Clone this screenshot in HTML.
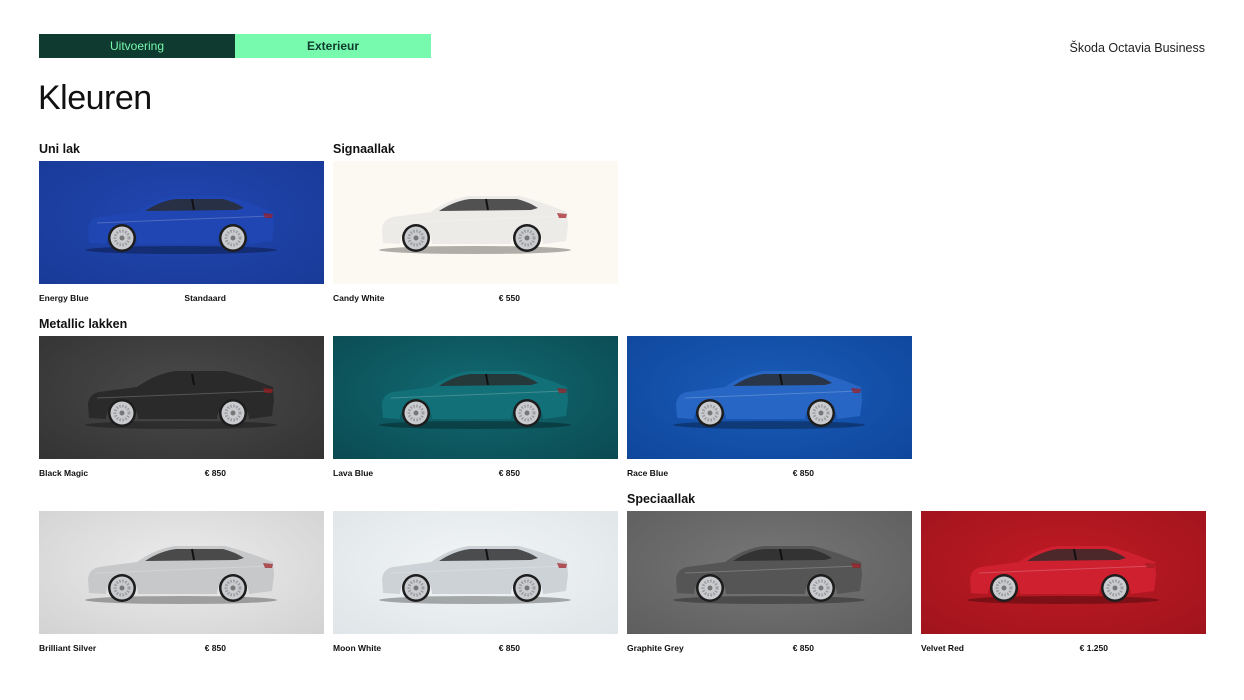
<!DOCTYPE html>
<html><head><meta charset="utf-8"><style>
*{margin:0;padding:0;box-sizing:border-box}
body{width:1244px;height:700px;background:#fff;font-family:"Liberation Sans",sans-serif;color:#111;position:relative;overflow:hidden}
.tab{position:absolute;top:34px;height:24px;width:196px;font-size:12px;line-height:24px;text-align:center}
.t1{left:39px;background:#0e3a2f;color:#78faae}
.t2{left:235px;background:#78faae;color:#0e3a2f;font-weight:bold}
.brand{position:absolute;right:39px;top:41px;font-size:12.5px;color:#222}
h1{position:absolute;left:38px;top:79px;font-size:34px;font-weight:normal;letter-spacing:-0.5px;color:#111}
.h{position:absolute;font-size:12.5px;font-weight:bold;color:#111}
.tile{position:absolute;width:285px;height:123px}
.tile svg{position:absolute;left:0;top:0}
.lab{position:absolute;font-size:8.5px;font-weight:bold;color:#111}
.pr{position:absolute;font-size:8.5px;font-weight:bold;color:#111;text-align:right;width:80px}
</style></head><body>
<svg width="0" height="0" style="position:absolute">
<defs>
<symbol id="car" viewBox="0 0 285 123">
<ellipse cx="142" cy="89" rx="96" ry="4" fill="#000" opacity=".3"/>
<path d="M50,82 L49,68 Q50,58 60,56 L98,51 Q116,38 136,35 L186,35 Q206,40 226,48 L234,51 L235,64 L233,80 L210,83 A16,16 0 0 0 178,83 L99,83 A16,16 0 0 0 67,83 Z" fill="currentColor"/>
<path d="M106,50 Q121,40 137,38 L184,38 Q196,41 205,47 L198,49 Z" fill="#2a2a2a" opacity=".8"/>
<path d="M153,38 L155,49" stroke="#111" stroke-width="2"/>
<path d="M58,62 L232,55" stroke="#fff" stroke-width="1" opacity=".2"/>
<path d="M224,52 L234,53 L233,57 L226,57 Z" fill="#a01a20" opacity=".7"/>
<circle cx="83" cy="77" r="14" fill="#1d1d1d"/><circle cx="83" cy="77" r="11.5" fill="#c9cbce"/><circle cx="83" cy="77" r="7" fill="none" stroke="#9a9ca0" stroke-width="3" stroke-dasharray="1.5 1.5"/><circle cx="83" cy="77" r="2.5" fill="#777"/>
<circle cx="194" cy="77" r="14" fill="#1d1d1d"/><circle cx="194" cy="77" r="11.5" fill="#c9cbce"/><circle cx="194" cy="77" r="7" fill="none" stroke="#9a9ca0" stroke-width="3" stroke-dasharray="1.5 1.5"/><circle cx="194" cy="77" r="2.5" fill="#777"/>
</symbol>
</defs></svg>

<div class="tab t1">Uitvoering</div><div class="tab t2">Exterieur</div>
<div class="brand">Škoda Octavia Business</div>
<h1>Kleuren</h1>

<div class="h" style="left:39px;top:142px">Uni lak</div>
<div class="h" style="left:333px;top:142px">Signaallak</div>
<div class="h" style="left:39px;top:317px">Metallic lakken</div>
<div class="h" style="left:627px;top:492px">Speciaallak</div>

<div class="tile" style="left:39px;top:161px;background:radial-gradient(ellipse at 50% 45%,#2146b0,#183a98);color:#1f46b2"><svg width="285" height="123"><use href="#car"/></svg></div>
<div class="tile" style="left:333px;top:161px;background:#fcf8f2;color:#ecebe8"><svg width="285" height="123"><use href="#car"/></svg></div>

<div class="tile" style="left:39px;top:336px;background:radial-gradient(ellipse at 50% 45%,#4a4a4a,#333);color:#2a2a2a"><svg width="285" height="123"><use href="#car"/></svg></div>
<div class="tile" style="left:333px;top:336px;background:radial-gradient(ellipse at 50% 45%,#116a72,#0b4a52);color:#127078"><svg width="285" height="123"><use href="#car"/></svg></div>
<div class="tile" style="left:627px;top:336px;background:radial-gradient(ellipse at 50% 45%,#1a5cb8,#0f469c);color:#2766c4"><svg width="285" height="123"><use href="#car"/></svg></div>

<div class="tile" style="left:39px;top:511px;background:radial-gradient(ellipse at 50% 45%,#ececec,#d2d2d2);color:#c6c8ca"><svg width="285" height="123"><use href="#car"/></svg></div>
<div class="tile" style="left:333px;top:511px;background:radial-gradient(ellipse at 50% 45%,#f2f5f6,#dfe5e8);color:#cdd2d6"><svg width="285" height="123"><use href="#car"/></svg></div>
<div class="tile" style="left:627px;top:511px;background:radial-gradient(ellipse at 50% 45%,#777,#5e5e5e);color:#555"><svg width="285" height="123"><use href="#car"/></svg></div>
<div class="tile" style="left:921px;top:511px;background:radial-gradient(ellipse at 50% 45%,#c01a24,#a0141c);color:#cf2030"><svg width="285" height="123"><use href="#car"/></svg></div>

<div class="lab" style="left:39px;top:293px">Energy Blue</div><div class="pr" style="left:146px;top:293px">Standaard</div>
<div class="lab" style="left:333px;top:293px">Candy White</div><div class="pr" style="left:440px;top:293px">€ 550</div>
<div class="lab" style="left:39px;top:468px">Black Magic</div><div class="pr" style="left:146px;top:468px">€ 850</div>
<div class="lab" style="left:333px;top:468px">Lava Blue</div><div class="pr" style="left:440px;top:468px">€ 850</div>
<div class="lab" style="left:627px;top:468px">Race Blue</div><div class="pr" style="left:734px;top:468px">€ 850</div>
<div class="lab" style="left:39px;top:643px">Brilliant Silver</div><div class="pr" style="left:146px;top:643px">€ 850</div>
<div class="lab" style="left:333px;top:643px">Moon White</div><div class="pr" style="left:440px;top:643px">€ 850</div>
<div class="lab" style="left:627px;top:643px">Graphite Grey</div><div class="pr" style="left:734px;top:643px">€ 850</div>
<div class="lab" style="left:921px;top:643px">Velvet Red</div><div class="pr" style="left:1028px;top:643px">€ 1.250</div>
</body></html>
